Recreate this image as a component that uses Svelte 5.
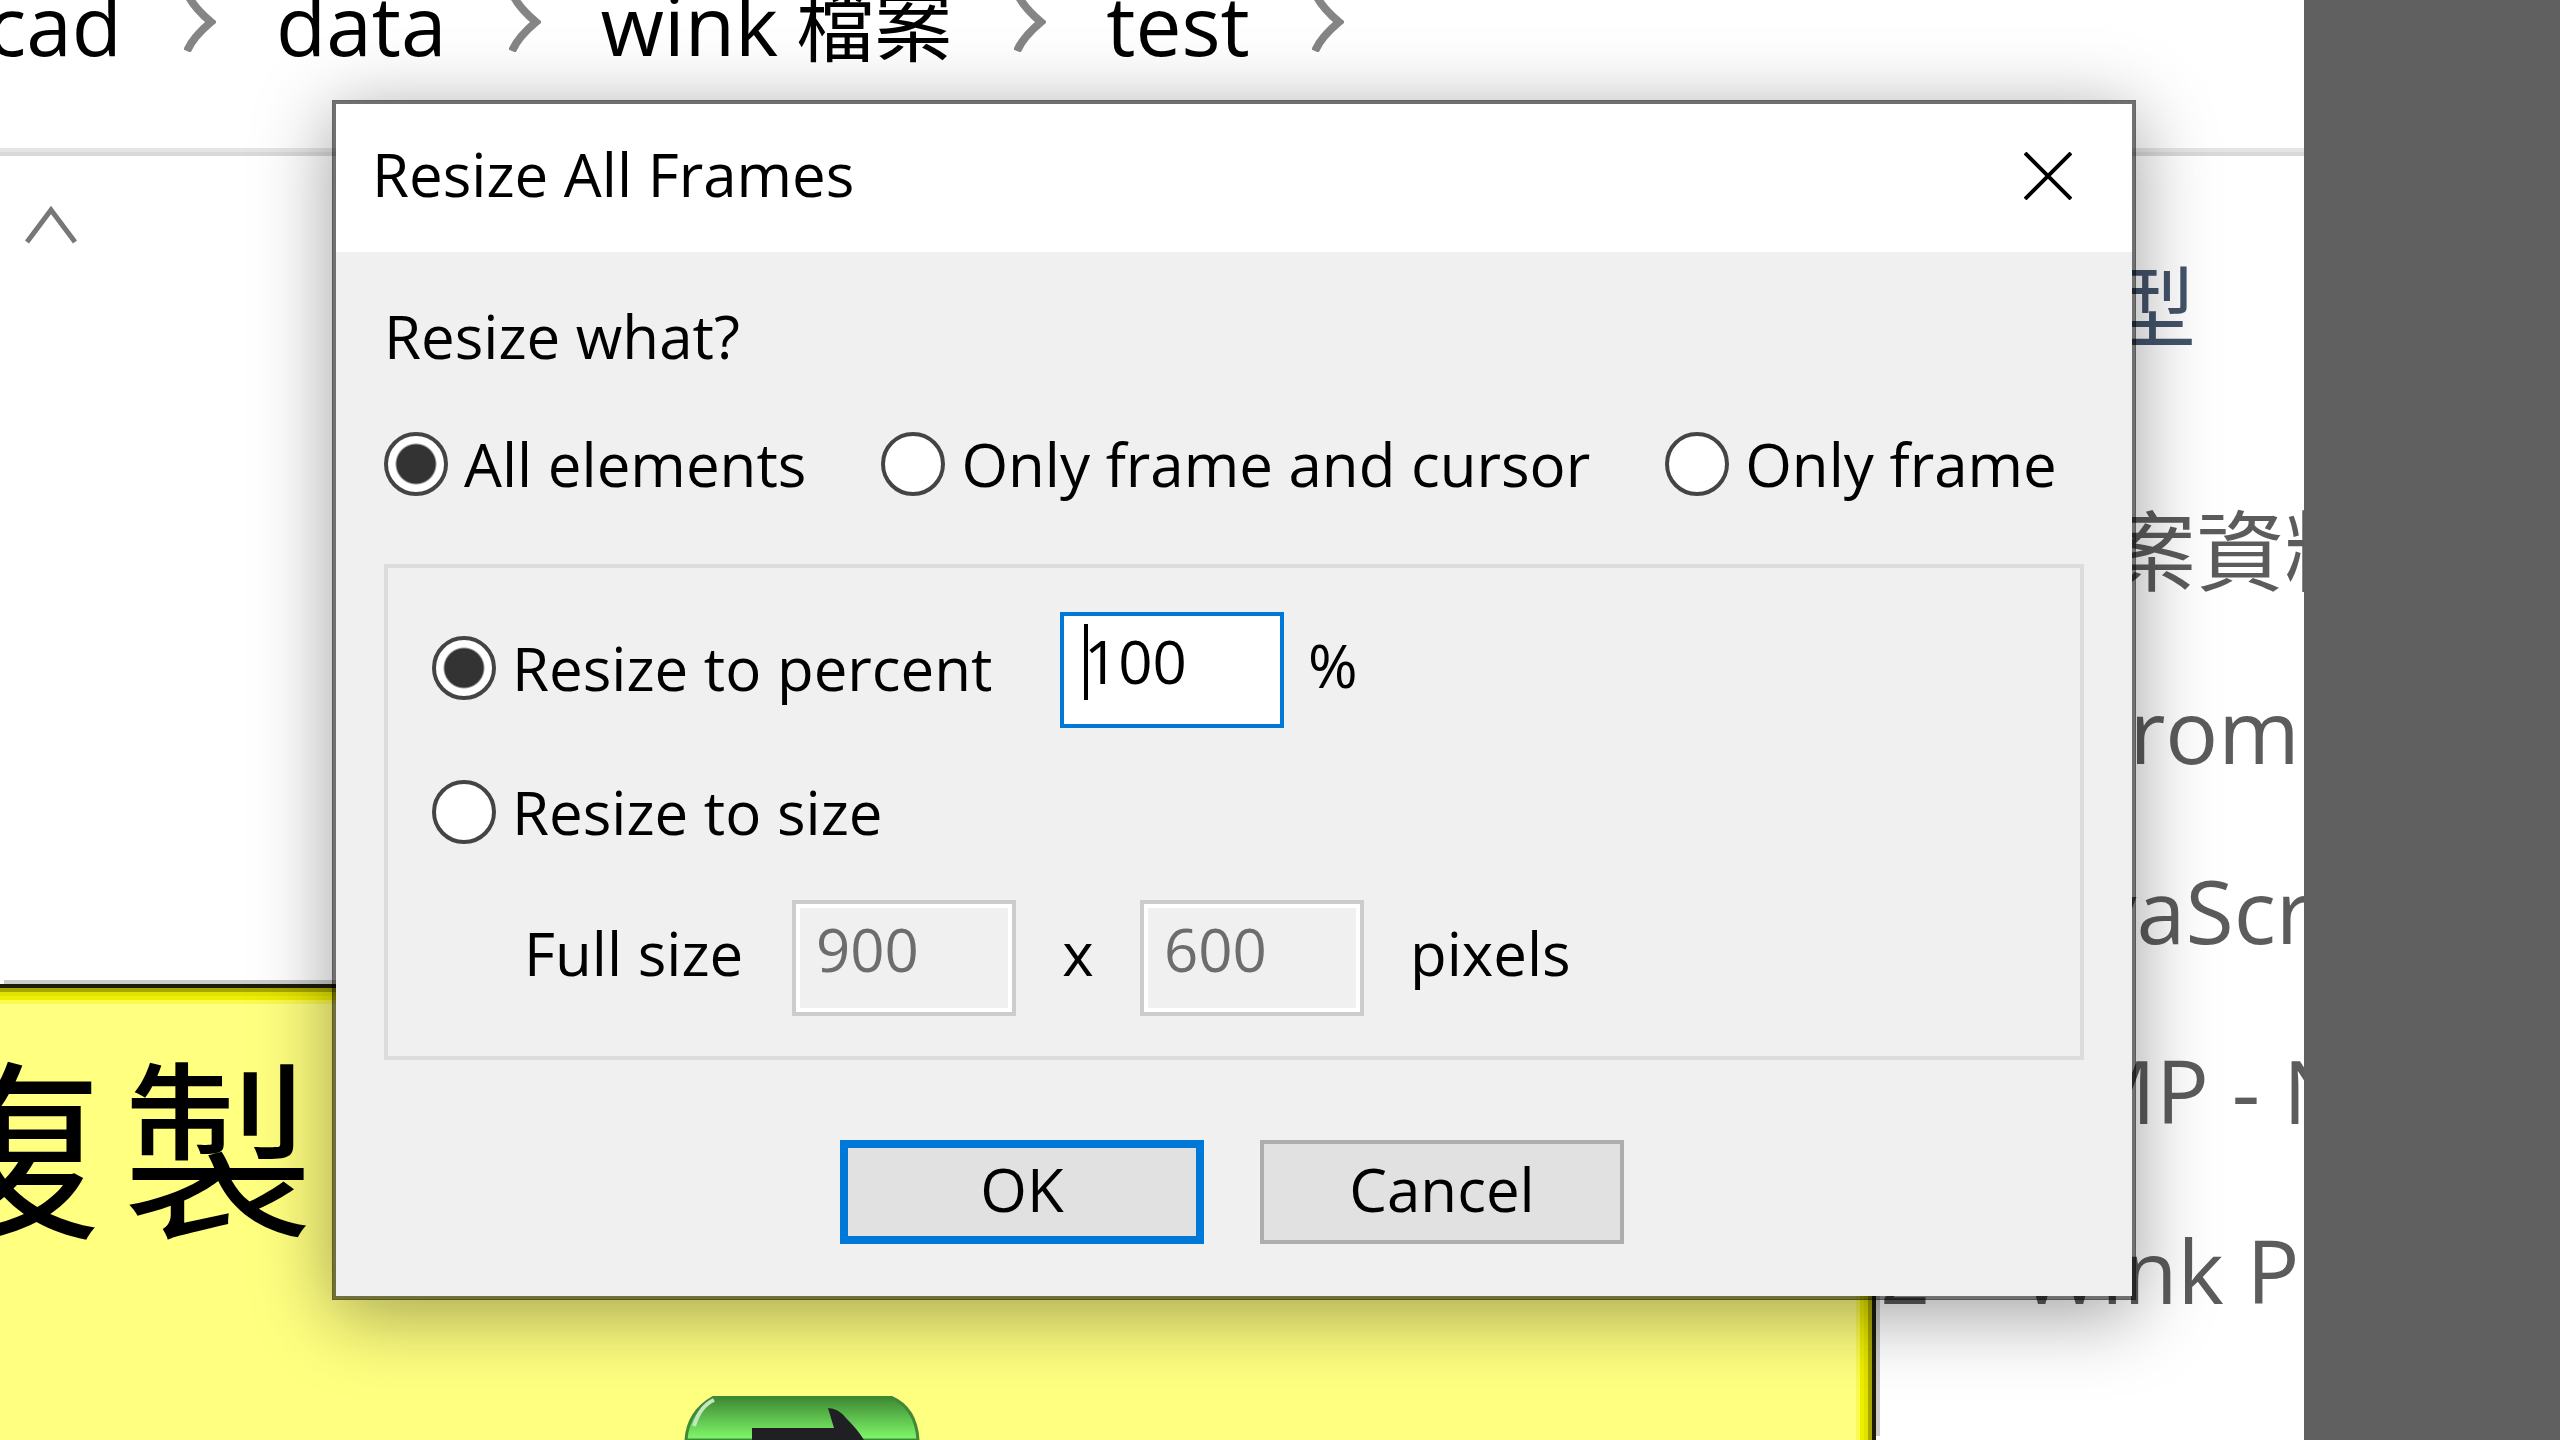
<script>
  const crumbs = [
    { latin: 'cad', han: '' },
    { latin: 'data', han: '' },
    { latin: 'wink', han: '檔案' },
    { latin: 'test', han: '' }
  ];
  const rows = [
    { time: '', type: '檔案資料夾' },
    { time: '', type: 'Chrome HTML' },
    { time: '', type: 'JavaScript' },
    { time: '', type: 'BMP - NConvert' },
    { time: '2', type: 'Wink Project' }
  ];
  let target = $state('all');
  let mode = $state('percent');
  let percent = $state('100');
  let width = $state('900');
  let height = $state('600');
</script>

<div class="screen">
  <main class="explorer">
    <nav class="crumbs" aria-label="Path">
      {#each crumbs as crumb, i}
        <a href="#{i}" class="crumb c{i}">{crumb.latin}{#if crumb.han}<span class="han">{crumb.han}</span>{/if}</a>
        <svg class="chevron" viewBox="0 0 32 60" aria-hidden="true">
          <path d="M3 1 Q9 15 27 30 Q9 45 3 59" fill="none" stroke="#858585" stroke-width="8" />
        </svg>
      {/each}
    </nav>

    <section class="listing">
      <svg class="sort" viewBox="0 0 52 40" aria-hidden="true">
        <path d="M2 38 L26 6 L50 38" fill="none" stroke="#777" stroke-width="5" />
      </svg>
      <table class="files">
        <thead>
          <tr><th></th><th class="type">類型</th></tr>
        </thead>
        <tbody>
          {#each rows as row}
            <tr><td class="time">{row.time}</td><td class="type">{row.type}</td></tr>
          {/each}
        </tbody>
      </table>
    </section>

    <section class="note">
      <p class="note-text"><span>複</span><span>製</span></p>
      <svg class="next" viewBox="0 0 236 44" aria-hidden="true">
        <defs>
          <linearGradient id="green" x1="0" y1="0" x2="0" y2="1">
            <stop offset="0" stop-color="#3c8530" />
            <stop offset="1" stop-color="#80fa6c" />
          </linearGradient>
        </defs>
        <path d="M2 44 Q4 14 32 0 H204 Q232 10 234 44 Z" fill="url(#green)" stroke="#3f8a38" stroke-width="3" />
        <path d="M10 30 Q16 10 30 4" fill="none" stroke="#c5e6c0" stroke-width="4" />
        <path d="M68 44 V32 H150 L144 12 Q154 12 162 22 Q174 34 180 44 Z" fill="#202024" />
      </svg>
    </section>

    <div class="dialog" role="dialog" aria-labelledby="dialog-title">
      <header class="titlebar">
        <h1 id="dialog-title">Resize All Frames</h1>
        <button class="close" aria-label="Close">
          <svg viewBox="0 0 48 48" aria-hidden="true">
            <path d="M1 1 L47 47 M47 1 L1 47" fill="none" stroke="#000" stroke-width="4" />
          </svg>
        </button>
      </header>

      <form class="body" onsubmit={(e) => e.preventDefault()}>
        <p class="question">Resize what?</p>
        <div class="choices">
          <label class="radio"><input type="radio" name="target" value="all" bind:group={target} />All elements</label>
          <label class="radio"><input type="radio" name="target" value="both" bind:group={target} />Only frame and cursor</label>
          <label class="radio"><input type="radio" name="target" value="frame" bind:group={target} />Only frame</label>
        </div>

        <div class="group">
          <div class="row">
            <label class="radio percent"><input type="radio" name="mode" value="percent" bind:group={mode} />Resize to percent</label>
            <span class="field">
              <input class="box" type="text" aria-label="Percent" bind:value={percent} />
              <span class="caret"></span>
            </span>
            <span class="unit">%</span>
          </div>
          <div class="row single">
            <label class="radio"><input type="radio" name="mode" value="size" bind:group={mode} />Resize to size</label>
          </div>
          <div class="row size">
            <label class="full" for="size-w">Full size</label>
            <input id="size-w" class="box" type="text" disabled={mode !== 'size'} bind:value={width} />
            <label class="by" for="size-h">x</label>
            <input id="size-h" class="box" type="text" disabled={mode !== 'size'} bind:value={height} />
            <span class="pixels">pixels</span>
          </div>
        </div>

        <footer class="actions">
          <button type="submit" class="action primary">OK</button>
          <button type="button" class="action">Cancel</button>
        </footer>
      </form>
    </div>
  </main>
  <aside class="side"></aside>
</div>

<style>
  :global(body) {
    margin: 0;
    overflow: hidden;
  }
  .screen {
    display: grid;
    grid-template-columns: 1fr 256px;
    height: 100vh;
    overflow: hidden;
    font-family: "Open Sans", "Noto Sans CJK TC", sans-serif;
    font-size: 60px;
    color: #000;
    background: #fff;
  }
  .side {
    background: #606060;
  }
  .explorer {
    position: relative;
    overflow: hidden;
  }
  .crumbs {
    display: flex;
    align-items: flex-start;
    box-sizing: border-box;
    height: 156px;
    border-bottom: 4px solid #d9d9d9;
    box-shadow: inset 0 -4px 0 #e5e5e5;
  }
  .crumb {
    flex: none;
    font-size: 82px;
    line-height: 48px;
    color: #000;
    text-decoration: none;
    white-space: nowrap;
  }
  .c0 {
    display: flex;
    justify-content: flex-end;
    width: 122px;
  }
  .han {
    margin-left: 18px;
    font-size: 78px;
  }
  .chevron {
    flex: none;
    width: 32px;
    height: 60px;
    margin: -8px 60px 0 62px;
  }
  .listing {
    display: flex;
    justify-content: space-between;
    align-items: flex-start;
  }
  .sort {
    width: 52px;
    height: 40px;
    margin: 48px 0 0 25px;
  }
  .files {
    border-collapse: collapse;
    table-layout: fixed;
    width: 424px;
    margin-top: 60px;
    font-size: 88px;
    line-height: 88px;
    color: #5c5c5c;
  }
  .files th,
  .files td {
    height: 180px;
    padding: 0;
    font-weight: 400;
    text-align: left;
    white-space: nowrap;
  }
  .files thead th {
    color: #44546a;
  }
  .files thead::after {
    content: "";
    display: block;
    height: 64px;
  }
  .files th:first-child {
    width: 140px;
  }
  .files .time {
    padding-right: 104px;
    text-align: right;
  }
  .note {
    position: absolute;
    left: 0;
    right: 428px;
    top: 984px;
    bottom: 0;
    border: solid #1c1c08;
    border-width: 4px 4px 0 0;
    background: #ffff80;
    box-shadow:
      inset -4px 4px 0 #a8a800,
      inset -8px 8px 0 #e2e200,
      inset -12px 12px 0 #eeee00,
      inset -16px 16px 0 #fafa50,
      4px -4px 0 #ccc;
  }
  .note-text {
    display: flex;
    justify-content: flex-end;
    gap: 20px;
    width: 314px;
    margin: 62px 0 0;
    font-size: 192px;
    line-height: 200px;
    white-space: nowrap;
  }
  .next {
    position: absolute;
    left: 684px;
    bottom: 0;
    width: 236px;
    height: 44px;
  }
  .dialog {
    position: absolute;
    left: 332px;
    right: 168px;
    top: 100px;
    border: 4px solid rgba(0, 0, 0, 0.56);
    background: #f0f0f0;
    background-clip: padding-box;
    box-shadow: 0 14px 72px rgba(0, 0, 0, 0.38);
  }
  .titlebar {
    display: flex;
    align-items: center;
    justify-content: space-between;
    box-sizing: border-box;
    height: 148px;
    padding: 0 36px 8px;
    background: #fff;
  }
  h1 {
    margin: 0;
    font-size: 60px;
    font-weight: 400;
    line-height: 80px;
  }
  .close {
    display: grid;
    place-items: center;
    width: 96px;
    height: 100px;
    padding: 4px 0 0;
    border: 0;
    background: none;
  }
  .close svg {
    width: 48px;
    height: 48px;
  }
  .body {
    padding: 44px 48px 52px;
  }
  .question {
    margin: 0;
    line-height: 80px;
  }
  .choices {
    display: flex;
    gap: 75px;
    margin: 56px 0 68px;
  }
  .radio {
    display: flex;
    align-items: center;
    gap: 16px;
    line-height: 64px;
    white-space: nowrap;
  }
  .radio input {
    appearance: none;
    flex: none;
    box-sizing: border-box;
    width: 64px;
    height: 64px;
    margin: 0;
    border: 4px solid #444;
    border-radius: 50%;
    background: #fff;
  }
  .radio input:checked {
    background: radial-gradient(circle, #333 19px, #fff 21px);
  }
  .group {
    padding: 44px 44px 40px;
    border: 4px solid #dcdcdc;
  }
  .row {
    display: flex;
    align-items: center;
  }
  .single {
    margin: 52px 0 56px;
  }
  .percent {
    width: 628px;
    padding-bottom: 4px;
  }
  .field {
    position: relative;
    display: flex;
  }
  .box {
    box-sizing: border-box;
    width: 224px;
    height: 116px;
    padding: 0 12px 18px 20px;
    border: 4px solid #0078d7;
    border-radius: 0;
    outline: none;
    background: #fff;
    font: inherit;
    color: #000;
  }
  .box:disabled {
    border-color: #ccc;
    background: #f0f0f0;
    box-shadow: inset 0 0 0 4px #fff;
    color: #6d6d6d;
  }
  .caret {
    position: absolute;
    left: 24px;
    top: 12px;
    width: 4px;
    height: 76px;
    background: #000;
  }
  .unit {
    margin-left: 24px;
  }
  .size label,
  .pixels,
  .unit {
    padding-bottom: 10px;
  }
  .full {
    width: 268px;
    margin-left: 92px;
  }
  .by {
    width: 124px;
    text-align: center;
  }
  .pixels {
    margin-left: 46px;
  }
  .actions {
    display: flex;
    justify-content: center;
    gap: 56px;
    margin-top: 80px;
    padding-right: 4px;
  }
  .action {
    box-sizing: border-box;
    width: 364px;
    height: 104px;
    padding: 0 0 6px;
    border: 4px solid #adadad;
    background: #e1e1e1;
    font: inherit;
    line-height: 80px;
    color: #000;
  }
  .primary {
    border: 8px solid #0078d7;
  }
</style>
